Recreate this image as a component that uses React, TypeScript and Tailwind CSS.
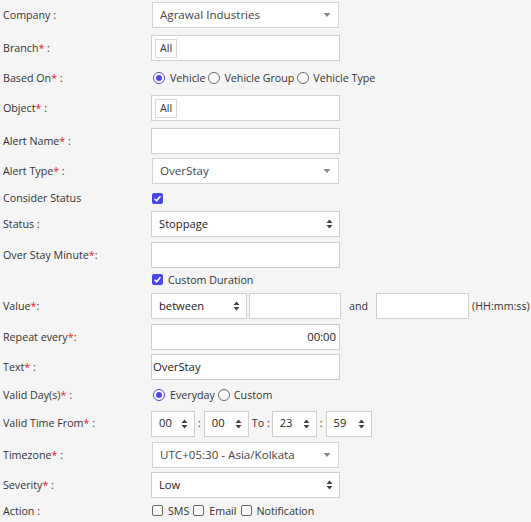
import React from "react";

const Req = () => <span className="text-[#e8202a]">*</span>;

function Label({ children }: { children: React.ReactNode }) {
  return <div className="w-[151px] shrink-0 pl-[3px] text-[10.7px] text-[#333]">{children}</div>;
}

function DownTri() {
  return (
    <svg width="8" height="5" viewBox="0 0 8 5" className="absolute right-[7px] top-1/2 -translate-y-1/2">
      <path d="M0.5 0.5 L7.5 0.5 L4 4.5 Z" fill="#888" />
    </svg>
  );
}

function UpDown() {
  return (
    <svg width="7" height="10" viewBox="0 0 7 10" className="absolute right-[6px] top-1/2 -translate-y-1/2">
      <path d="M0.5 4 L6.5 4 L3.5 0.5 Z" fill="#444" />
      <path d="M0.5 6 L6.5 6 L3.5 9.5 Z" fill="#444" />
    </svg>
  );
}

function Select2({ value, w = 187 }: { value: string; w?: number }) {
  return (
    <div
      className="relative ml-[1px] h-[26px] border border-[#d4d4d4] bg-white flex items-center pl-[7px] text-[11.6px] text-[#444]"
      style={{ width: w }}
    >
      {value}
      <DownTri />
    </div>
  );
}

function NSelect({ value, w, pl = 7 }: { value: string; w: number; pl?: number }) {
  return (
    <div
      className="relative h-[26px] border border-[#cfcfcf] bg-white flex items-center text-[11.2px] text-[#222]"
      style={{ width: w, paddingLeft: pl }}
    >
      {value}
      <UpDown />
    </div>
  );
}

function Input({ w = 189, children, right = false }: { w?: number; children?: React.ReactNode; right?: boolean }) {
  return (
    <div
      className={`h-[26px] border border-[#cfcfcf] bg-white flex items-center text-[11.3px] text-[#222] ${right ? "justify-end pr-[3px]" : "pl-[1px]"}`}
      style={{ width: w }}
    >
      {children}
    </div>
  );
}

function TagBox() {
  return (
    <div className="h-[26px] w-[189px] border border-[#cfcfcf] bg-white flex items-center pl-[3px]">
      <div className="h-[19px] px-[4px] border border-[#d8d8d8] flex items-center text-[10.7px] text-[#333]">All</div>
    </div>
  );
}

function Radio({ checked }: { checked?: boolean }) {
  return checked ? (
    <span className="inline-flex w-[12px] h-[12px] rounded-full border-[1.5px] border-[#4a46e8] items-center justify-center bg-white">
      <span className="w-[6px] h-[6px] rounded-full bg-[#4a46e8]" />
    </span>
  ) : (
    <span className="inline-block w-[12px] h-[12px] rounded-full border border-[#666] bg-white" />
  );
}

function Check({ checked }: { checked?: boolean }) {
  return checked ? (
    <span className="inline-flex w-[11px] h-[11px] rounded-[2px] bg-[#4a46e8] items-center justify-center">
      <svg width="9" height="9" viewBox="0 0 9 9">
        <path d="M1.6 4.8 L3.6 6.8 L7.4 2.2" stroke="white" strokeWidth="1.6" fill="none" />
      </svg>
    </span>
  ) : (
    <span className="inline-block w-[11px] h-[11px] rounded-[2px] border border-[#666] bg-white" />
  );
}

export default function App() {
  return (
    <div
      className="w-[531px] h-[522px] bg-[#f5f5f5] overflow-hidden flex flex-col"
      style={{ fontFamily: '"Open Sans", "Noto Sans", sans-serif' }}
    >
      <div className="flex items-center h-[26px] mt-[2px]">
        <Label>Company :</Label>
        <Select2 value="Agrawal Industries" />
      </div>
      <div className="flex items-center h-[26px] mt-[7px]">
        <Label>Branch<Req /> :</Label>
        <TagBox />
      </div>
      <div className="flex items-center h-[24px] mt-[5px]">
        <Label>Based On<Req /> :</Label>
        <div className="flex items-center text-[10.7px] text-[#333] pl-[2px]">
          <Radio checked />
          <span className="ml-[5px] mr-[3px]">Vehicle</span>
          <Radio />
          <span className="ml-[4px] mr-[3px]">Vehicle Group</span>
          <Radio />
          <span className="ml-[4px]">Vehicle Type</span>
        </div>
      </div>
      <div className="flex items-center h-[26px] mt-[5px]">
        <Label>Object<Req /> :</Label>
        <TagBox />
      </div>
      <div className="flex items-center h-[26px] mt-[7px]">
        <Label>Alert Name<Req /> :</Label>
        <Input />
      </div>
      <div className="flex items-center h-[26px] mt-[4px]">
        <Label>Alert Type<Req /> :</Label>
        <Select2 value="OverStay" />
      </div>
      <div className="flex items-center h-[18px] mt-[5px]">
        <Label>Consider Status</Label>
        <div className="pl-[1px] flex items-center">
          <Check checked />
        </div>
      </div>
      <div className="flex items-center h-[26px] mt-[4px]">
        <Label>Status :</Label>
        <NSelect value="Stoppage" w={189} />
      </div>
      <div className="flex items-center h-[26px] mt-[5px]">
        <Label>Over Stay Minute<Req />:</Label>
        <Input />
      </div>
      <div className="flex items-center h-[18px] mt-[3px]">
        <Label>{""}</Label>
        <div className="pl-[1px] flex items-center text-[10.7px] text-[#333]">
          <Check checked />
          <span className="ml-[5px]">Custom Duration</span>
        </div>
      </div>
      <div className="flex items-center h-[26px] mt-[4px]">
        <Label>Value<Req />:</Label>
        <NSelect value="between" w={96} />
        <div className="ml-[2px]">
          <Input w={92} />
        </div>
        <span className="ml-[8px] text-[10.7px] text-[#333]">and</span>
        <div className="ml-[8px]">
          <Input w={93} />
        </div>
        <span className="ml-[3px] text-[10.7px] text-[#333]">(HH:mm:ss)</span>
      </div>
      <div className="flex items-center h-[26px] mt-[5px]">
        <Label>Repeat every<Req />:</Label>
        <Input right>00:00</Input>
      </div>
      <div className="flex items-center h-[26px] mt-[4px]">
        <Label>Text<Req /> :</Label>
        <Input>OverStay</Input>
      </div>
      <div className="flex items-center h-[20px] mt-[5px]">
        <Label>Valid Day(s)<Req /> :</Label>
        <div className="flex items-center text-[10.7px] text-[#333] pl-[2px]">
          <Radio checked />
          <span className="ml-[5px] mr-[3px]">Everyday</span>
          <Radio />
          <span className="ml-[4px]">Custom</span>
        </div>
      </div>
      <div className="flex items-center h-[25px] mt-[6px]">
        <Label>Valid Time From<Req /> :</Label>
        <div className="flex items-center text-[10.7px] text-[#333]">
          <NSelect value="00" w={44} pl={7} />
          <span className="mx-[3px]">:</span>
          <NSelect value="00" w={45} pl={7} />
          <span className="ml-[3px] mr-[2px]">To :</span>
          <NSelect value="23" w={45} pl={7} />
          <span className="mx-[3px]">:</span>
          <NSelect value="59" w={46} pl={7} />
        </div>
      </div>
      <div className="flex items-center h-[26px] mt-[6px]">
        <Label>Timezone<Req /> :</Label>
        <Select2 value="UTC+05:30 - Asia/Kolkata" />
      </div>
      <div className="flex items-center h-[26px] mt-[4px]">
        <Label>Severity<Req /> :</Label>
        <NSelect value="Low" w={189} />
      </div>
      <div className="flex items-center h-[18px] mt-[4px]">
        <Label>Action :</Label>
        <div className="flex items-center text-[10.7px] text-[#333] pl-[1px]">
          <Check />
          <span className="ml-[5px] mr-[4px]">SMS</span>
          <Check />
          <span className="ml-[5px] mr-[4px]">Email</span>
          <Check />
          <span className="ml-[5px]">Notification</span>
        </div>
      </div>
    </div>
  );
}
